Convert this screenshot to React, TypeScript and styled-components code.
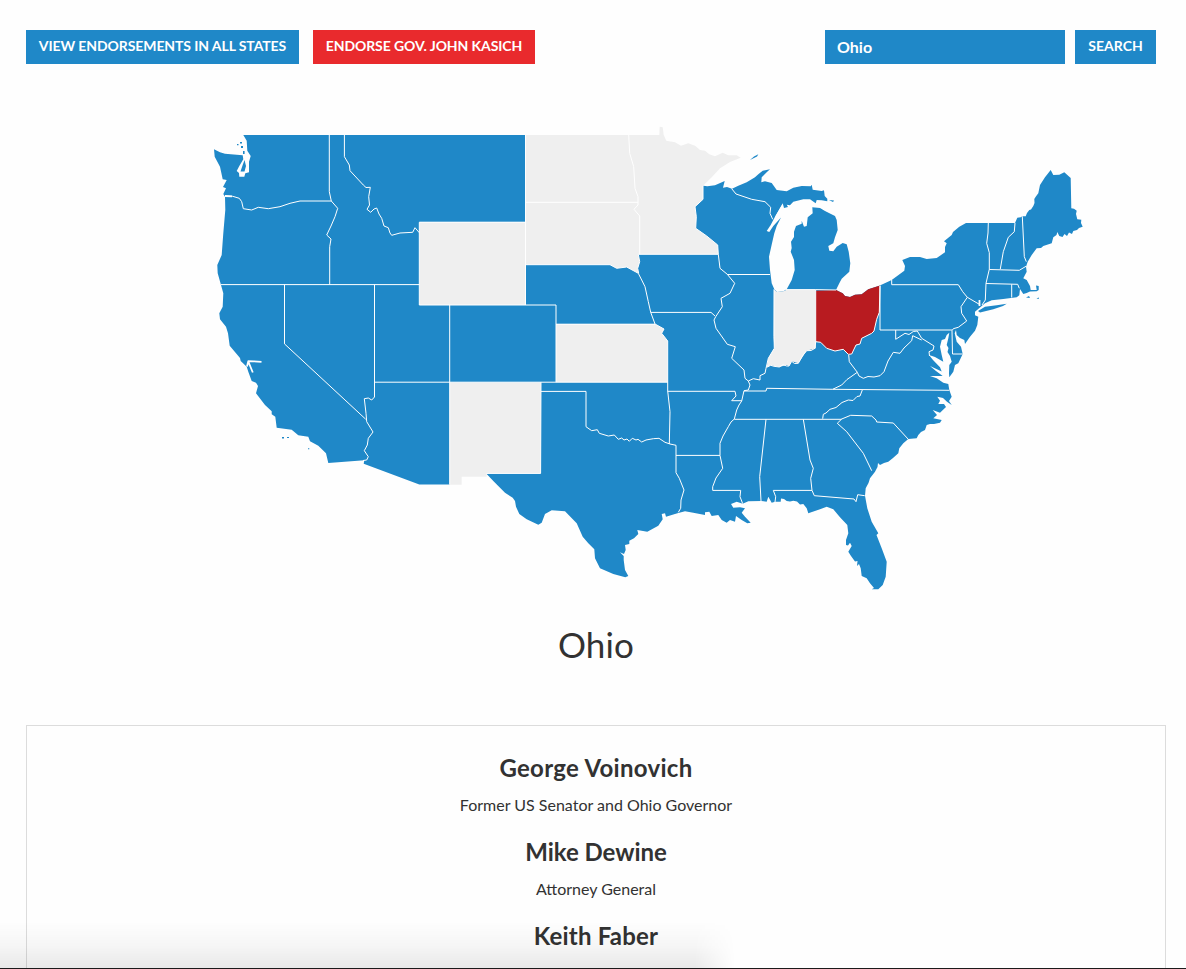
import React, { useState } from "react";
import styled, { createGlobalStyle } from "styled-components";

const BLUE = "#1f88c8";
const RED = "#e92a2d";
const DARK_RED = "#b81b20";
const GREY = "#efefef";

const GlobalStyle = createGlobalStyle`
  * { box-sizing: border-box; }
  body {
    margin: 0;
    background: #fefefe;
    color: #323232;
    font-family: Lato, "Open Sans", sans-serif;
  }
`;

const Page = styled.div`
  position: relative;
  height: 969px;
  overflow: hidden;
  padding: 30px 20px 0 26px;
`;

const Toolbar = styled.div`
  display: flex;
  justify-content: space-between;
  padding-right: 10px;
`;

const Group = styled.div<{ $gap: number }>`
  display: flex;
  gap: ${(p) => p.$gap}px;
`;

const Button = styled.button<{ $color: string; $width: number; $tracking: number }>`
  width: ${(p) => p.$width}px;
  height: 34px;
  padding: 0 0 2px;
  border: 0;
  background: ${(p) => p.$color};
  color: #fff;
  font: 700 14px/32px Lato, sans-serif;
  letter-spacing: ${(p) => p.$tracking}px;
  text-transform: uppercase;
  white-space: nowrap;
`;

const SearchInput = styled.input`
  width: 240px;
  height: 34px;
  padding: 0 12px 1px;
  border: 0;
  border-radius: 0;
  background: ${BLUE};
  color: #fff;
  font: 700 16px/33px Lato, sans-serif;
  outline: 0;
`;

const Map = styled.svg`
  display: block;
  width: 900px;
  height: 500px;
  margin: 46px 0 0 174px;
`;

const StateTitle = styled.h1`
  margin: 12px 0 0;
  font-size: 35px;
  font-weight: 400;
  line-height: 44px;
  letter-spacing: 0.1px;
  text-align: center;
`;

const List = styled.section`
  display: flex;
  flex-direction: column;
  align-items: center;
  height: 300px;
  margin-top: 59px;
  padding-top: 24px;
  border: 1px solid #dcdcdc;
`;

const Person = styled.article`
  height: 84px;
  text-align: center;
`;

const Name = styled.h2<{ $tracking: number }>`
  margin: 0;
  font-size: 24px;
  font-weight: 700;
  line-height: 36px;
  letter-spacing: ${(p) => p.$tracking}px;
`;

const Role = styled.p`
  margin: 7px 0 0;
  font-size: 16px;
  line-height: 24px;
`;

const BottomShade = styled.div`
  position: absolute;
  left: -40px;
  bottom: 0;
  width: 775px;
  height: 48px;
  background: linear-gradient(to bottom, rgba(0, 0, 0, 0), rgba(0, 0, 0, 0.03) 50%, rgba(0, 0, 0, 0.085));
  mask-image: linear-gradient(to right, #000 735px, transparent 775px);
`;

const BottomEdge = styled.div`
  position: absolute;
  left: 0;
  right: 0;
  bottom: 0;
  height: 1px;
  background: #1c1a1b;
`;

const MAINLAND =
  "M214,149.3 220,152.3 225,153.7 236.7,154.7 242.7,155.3 243.3,159.3 239.3,166 236.7,171 239,173 239.3,176.7 244.3,176.7 245.3,173.3 249,172.3 249,161.7 250.7,156 247.3,150.7 246.7,140.7 243.3,135 " +
  "525.5,135 530,140 650,180 701,188 703.3,185.7 " +
  "707.3,186.3 715,185.3 724.7,181 723,187.7 727,187 732,188.7 738.3,185.7 746.7,182.3 755,177.3 758.3,174.3 762.7,170.7 770,169.3 766.7,172.3 761.7,177.3 761.3,182.3 765,181.3 771.7,183 776.7,190 786.7,191.3 793.3,187.7 801.7,186 810.7,186.3 811.7,184.7 812.7,189.7 821.7,191 824,190.3 824.7,196 827.3,198.7 827.3,201.3 821.7,200.3 816.7,200 815.7,203.3 810,199.3 803.3,199.3 793.3,201.7 790,205.3 786.7,204.7 788,207 784,208 782.7,203.3 779.3,209.3 775,216.7 770.7,225 766.7,231 769.3,232 773.3,226 781,217.5 776.7,226 774.3,233.3 772,243.3 769,256.7 770,270 771.7,283.3 774.3,289.3 777.3,292 783.3,291.3 786.7,289.3 " +
  "791.7,280 794.7,270 794,260 790.7,251.7 791.7,248 791,241.7 794,237 794,231.7 796,226 801.7,223.7 801.7,220.7 804,226.7 806.7,226 807.7,217.3 812.7,213.3 812.3,207.3 820,208 825,211 835,216 836.7,220 837.7,230 835,237.3 833.3,243.3 828.3,246 829.3,250.7 833.3,251.3 836.7,246.7 842.7,243 846.7,244.3 848.7,251.7 850.3,263.3 849.3,271.7 841.7,278.7 839.3,283.3 836,290 " +
  "842.7,293.3 845,296 850,297 855,294.7 861.7,294.3 868.3,289.3 879.3,285.7 891.7,280 904.3,270.7 905,266 902.3,260 910,257 920,257 926.7,259 936.7,258 945,252.3 945,247 946.7,243.3 944,241.3 951.7,235 953,232 959.3,226.7 966,223 1015,223 1017.3,217.7 1020.7,217.3 1022.3,216.3 1025.7,216.3 1027,213 1029.3,210 1031,209.5 1033.3,206 1034.5,203 1034.3,199 1035.7,196.7 1038.3,193.3 1040,185 1045,177.3 1050.7,170 1053.3,175 1059.3,174.7 1064.3,172.3 1070.7,178 1071.3,208.3 1074,208.7 1076.7,210.7 1076,214 1077.3,219.3 1081.3,219.7 1081,223 1082.7,226.7 1079,228 1077,230 1073.3,231 1072,234 1069,232.5 1067,236 1064.5,234 1062.5,237 1059.3,236 1057.3,232 1056.5,235 1053.3,237.3 1051.7,243.3 1043.3,246 1041,248 1036.7,248.3 1031.7,255 1027.7,261.7 1026,266.7 1026.7,271.7 1023.3,278.3 1026.7,280 1030,286 1030.7,290 1036.7,290 1036,285.5 1038.7,286 1038.7,290 1036.7,291.3 1030,291.5 1026.7,293 1023.3,294 1020,289 1019.3,295.3 1016.7,297.3 1003.3,299 991.7,300.3 985,303.3 981.7,306 975,311.7 975,315.3 978.3,316.7 977.3,325 975,330.7 970,336.7 965,344 " +
  "964.3,340 960,338 956.7,335 956,330 954.7,333.3 956.7,341.7 961,346.7 962.7,354 958.3,363.3 955,365 953.3,371.7 949.3,377.3 949,373.3 949.3,365 951.7,361.7 950,356 947.5,352 948.5,348 946.7,345 948.3,338.3 949.3,332.7 946.7,335 945,339 941.7,340 940,346.7 941.7,355 943.3,361.7 935,357 929,355 933,360 940,367.3 941.7,371.5 930,366 936,371 942.7,376 930,376 936.7,378.3 943.3,382.7 948.3,384 949.3,390 951.7,396.7 949,401 951.7,405 947,401.7 943,398 937.3,396.7 940,400.7 938.3,404 944,404 946,407 940,412.7 932.7,410 937,415 933.3,418.3 941.7,420 940,422.7 934,424 930,424 926.7,425 925,430 921,432 918.3,435 916.7,438.3 908.3,439 903.3,443.3 899.3,448.3 898.3,453.3 893,458 888.3,461.7 884,463 880,465 878,463 877.5,467 875,471.7 870,478.3 868.5,483 865.7,488.3 865,495.7 867.3,508.3 871.7,521.7 878.3,533.3 876.5,535 881.7,548.3 886.7,561.7 885.7,576.7 882.7,585 878.3,589.3 871.7,589.3 874,588 870,583.3 866.7,578.3 861.7,576 860.7,568.3 859,564 857,566 857.5,561 855,561.5 851,556 848.3,551.7 851.7,546 850,542.7 848,545.5 846,545 846,540 848.3,533.3 847.3,525 840,517.3 833.3,509.3 826.7,506.7 820,509.3 808.3,513.3 806.7,508.3 803.3,504 800,504.5 797,501.5 793.3,500.7 790,501.5 786.7,501 784,499 781,498.5 780.7,501.7 775,501.7 771.7,502.7 768.3,496.7 766.7,501.7 761,501 748.3,501.3 742.7,503.7 " +
  "736.7,501.7 731,504 733.3,507.7 740,507.3 745,508.3 741.7,512.7 745,516.7 750.7,522.7 747.3,523.3 741.7,520 736,516 735,521.7 730,520 726.7,522.7 721.7,520 718.3,515 711.7,516 709.3,511.7 705,512.3 705,515 693.3,512.7 685,511.3 678.3,513 671.7,515 666,516.7 665,513.3 661.7,514 662.7,519.3 658.3,525.7 647.3,531.7 637.3,530 638.3,534 634,538.3 629.3,540.7 629.3,544 625,545 625.7,550 624,554 620,552.3 623.7,556 623.7,560 625,570 628.3,576 625.3,577.3 613.3,574 600,568.3 595,558.3 594.3,549.3 588.3,543.3 582.7,536.7 576.7,523.3 565,511.3 551.7,510.3 545,514 541.7,522.7 538.3,524.7 526.7,519.3 519.3,514 516,506.7 515,501 512.7,497.7 505,492.7 493.3,481 486.7,474 " +
  "490,472 452,472 449.7,484.5 419.3,484.5 363.7,463.7 364.3,460.3 328.3,463 326,453.3 318.3,445.7 310,441.3 308.3,436.7 298.3,435.3 291.7,429.7 276.7,427.7 275.3,416.7 271.7,414.3 271.7,411.3 265,405 256,393.3 258,386 256,382.7 251.7,381 248.3,371.7 246.7,366.7 240.7,361 240,358 229.7,345.7 228,333.3 226,326.7 220,319.3 219.3,313.3 222.7,306.7 223.3,293.3 221,285 217.7,273.3 217.3,265 221.7,255 223.3,233.3 225.3,210 225,196.7 223.3,194 226,188.3 223,187 226.7,180 222.7,179.3 220,166.7 214.7,156.7Z";

const ISLANDS = [
  "M978,311 985,306.7 996.7,305.3 1006.7,303.7 1003,306 993.3,309.3 980,312.6Z",
  "M750,160 754,156.5 758.3,154.3 757,156.5Z",
  "M244.5,160 242,167 240.5,171.5 244.5,171.5 246,166Z",
  "M237,144h1.5v1.2h-1.5ZM240,142h2v1.6h-2ZM241,146h2v2h-2ZM243,151h1.6v3h-1.6Z",
  "M282,437h2v1.5h-2Z",
  "M287,437h2v1h-2Z",
  "M308,448.2h1.3v1h-1.3Z",
  "M1026,297.5 1029,296 1030,298Z",
  "M1036.5,298.5 1038.8,297.5 1038.8,299Z",
  "M829,200 834,200.5 833,202Z",
];

const UNENDORSED = [
  // North Dakota, South Dakota and Minnesota
  "M525.5,135H659.3L659.7,126.7 662.7,127.3 663.7,135 666.3,140.7 675,142.3 681,145.7 688.3,143.3 695,145.7 700,150 705,150.7 709.3,154.3 715,156.3 722.7,152.7 728.3,155.3 736.7,155.3 740.7,157.7 730,162 720,168.3 711.7,177.3 703,185.7 703,199.3 695,206.7 696.3,216.7 695.7,228.3 706.7,236 717.7,245 718.3,254.3 638.3,254.3 639.7,261.7 637.7,268.3 638.3,273.3 626.7,267 616.7,268.3 610,264.7 525.5,264.7Z",
  // Wyoming
  "M419.3,222H525.5V305H419.3Z",
  // Kansas
  "M556,324H655L664,329 661.7,333.3 667.7,341V382.3H556Z",
  // New Mexico
  "M449.7,382.3H541L540.7,473.4H486.7V476.7H461.7V484.7H449.7Z",
  // Indiana
  "M774,289.5 777.3,292 783.3,291.3 786.7,289.7H815.7V348.3L806.7,350.7 798.3,363.3 791.7,361.3 789,366 786.7,365 779.3,367 770.7,365.3 766.7,367.3 768.3,358.3 774.3,348.3 773.7,336.7Z",
];

const OHIO =
  "M815.7,290.7 836,290 842.7,293.3 845,296 850,297 855,294.7 861.7,294.3 868.3,289.3 880,285.5 879.3,312.3 876.7,319.3 874,331 871.7,333.3 861.7,338.3 860,344 856,345 851.7,354 848.3,354.3 843.3,349.3 835,351 826.7,348.3 820.7,342.3 815.7,341.7Z";

const BORDERS = [
  "M225,196 232.7,196.3 239.3,198.3 241.7,201.7 243.3,208.7 251.7,210 258.3,207.3 268.3,208.7 280,206.7 290,203.3 300,201 331.3,201",
  "M329.3,135V191.7L331.3,201 337.7,208.3 335,216.7 331,226 326.7,235 331,239 329.7,246.7V284.5",
  "M221,284.6H419.5",
  "M344.4,135V156.7L349.3,165 350,170.7 363.3,185 366,187.5 370.3,187.3 368.7,196.7 369.5,205 367,209.3 370.7,212.3 374,209 376.7,208 379,214 381.7,218.3 384,226 388.3,227.7 390,233 391.7,235.3 400,233 412.7,232.3 415,227.7 419.3,232.7",
  "M284.5,284.5V343.9L365.7,419.2",
  "M374.5,284.5V397L371.7,400 368.3,398 364.3,398.7 366,413.3 366.7,421.7 373,432 368.3,438.3 367.3,445 364.3,450.7 368.3,456.7 366.7,460 363,460.5",
  "M374.5,382.2H667.7",
  "M449.7,305V484.6",
  "M419.3,222.3V305H556V382.2",
  "M419.3,222.2H525.5M525.5,135V305",
  "M556,324.2H655",
  "M525.5,264.7H610L616.7,268.3 626.7,267 638.3,273.3 641.7,280 645,286.7 648.3,301.7 650.7,312.3 655,324 664,329 661.7,333.3 667.7,341V391L670,411.7 669.3,444",
  "M525.5,202.3H638",
  "M628.7,135 629.7,153.3 633.7,166.7 635,188.3 638,196.7V205L634,209.3 639.7,216V254.3",
  "M718.3,254.3H638.3L639.7,261.7 637.7,268.3 638.7,273.3",
  "M703,185.7V199.3L695,206.7 696.3,216.7 695.7,228.3 706.7,236 717.7,245 718.3,254.3 720,268.3 727.3,274.3 734.7,283.3 730,293.3 721,298.3 722.3,306.7 715.7,316.7 714,320 716,328.3 727.3,344.3 735.3,346.7 731.7,358.3 744,370 745,378.3 748.3,381 750,385 748.3,390 744,390.7 741.7,401 739,405 736.7,410 734.3,419 731,422 728.3,426.7 723,436 720,443.3V455.5L722.7,468.3 716,478 712.7,486.7V490.4H740.7L740,496.7 742.7,503.7",
  "M727.3,274.5H770",
  "M731.7,188.7 736,194 751.7,199.3 765,201.7 770.7,207.3 770,213.3 772.7,219.3",
  "M650.7,312.4H711L715,316",
  "M667.7,391.3H735L736,396 731.7,400.7H741.7",
  "M541,382.2 540.6,473.4H486.7M541,391.4H586V426.7L591.7,430.7 597.3,429.7 599.3,433.3 608.3,436 614.3,435 618.3,439.3 621.7,438 624,440 627,439 629.3,441.3 632.3,438.3 636,440 638,439.3 641.7,442 646,440 653.3,438.7 659,438.3 665,442.3 670,444 676,445.3V472.7L679.3,478.3 684,490 681,500 680.7,508.3 678.3,512.3",
  "M676,455.4H720",
  "M774,289.3V336.7L774.3,348.3 768.3,358.3 766,368.3 765,373.3 760,375.7 760,380 753.3,378.7 748.3,381",
  "M766.7,367.3 770.7,365.3 774,366.3 779.3,367 783,364.7 786.7,366 789,366 791.7,361.3 794.5,363.5 798.3,363.3 803,355 806.7,350.7 811,350.5 815,348.3 815.7,341.7 820.7,342.3 826.7,348.3 835,351 843.3,349.3 848.3,354.3 851.7,354 856,345 860,344 861.7,338.3 871.7,333.3 874,331 876.7,319.3 879.3,312.3 880,285.5",
  "M786,289.6H815.7L836,290M815.7,289.6V342",
  "M880,286V330H952M891.7,280V284.7H958.3L962.7,291.7 967.3,297.3 961,306.7 961.7,313.3 966.7,321 958.3,327.3 953.3,328.7 952,330.7 952.5,354H962.7",
  "M967.3,297.3 979.3,304.3",
  "M744,391H766L766.7,388.3 832.7,389.3 949.3,390.3",
  "M734.3,419.3H766L841.7,419.3",
  "M766,419.3 759.7,476.7 761,501",
  "M803.3,419.3 810,460 813.3,468.3 810.7,478.3 812,490.4 814.3,495.7 854,499 856,501.7 857.7,494.7 864.7,495.7",
  "M812,490.4H773.3L775.7,496.7 775,502",
  "M841.7,419 837.3,423.3 846.7,431.7 863.3,453.3 871.7,470.7",
  "M841.7,419 850.7,415.3 871.7,416 876,420 876.7,422 893.3,423 908.3,439.3",
  "M822.7,418.7 823.3,414.3 826,413 830,409.3 836,407.5 842,402.5 848.3,400 853,400.5 857,396.5 860,396 862.3,390",
  "M832.7,389.3 841.7,385 847,379.5 857.3,372.3M848.7,355 849.3,361.7 857.3,372.3 859,376 863.3,378.3 868,376.5 874,377 880,375.7 884,371.7 888,361 893.3,352.3 900,353.3 904,348 911.7,340.7 912.7,335.7 921.7,340",
  "M895.7,330V339.3L905,333.3 909,334.5 913.3,331.5 917.3,331 921.7,338.3 934,346 933,350 929,351.7 929.5,356",
  "M988.3,223 988,233 986.7,243.3 989.3,252.7V269.3L986,283.3 985.3,300 982,305",
  "M1015,223 1014.3,231.7 1008.3,237.3 1003.3,251.7 1000.3,269",
  "M989.3,269.5 1019.3,270.3 1026,266.3",
  "M1022.3,216.3 1024.3,256.7 1026.3,261.7",
  "M986,283.5 1017.7,284.3 1019.3,288.3M1011.7,284.3V297.5",
];

// Narrow bays and rivers cut into the land
const INLETS = [
  "M247,366.5 248.3,361.2 254,361.3 261.5,361.8M248.5,362 252.8,372.5",
  "M225,196 232,196.3",
  "M782.5,206 776,217M979.5,300V306",
];

const PEOPLE = [
  { name: "George Voinovich", role: "Former US Senator and Ohio Governor", tracking: 0.3 },
  { name: "Mike Dewine", role: "Attorney General", tracking: -0.05 },
  { name: "Keith Faber", tracking: 0.2 },
];

export default function App() {
  const [query, setQuery] = useState("Ohio");
  return (
    <>
      <GlobalStyle />
      <Page>
        <Toolbar>
          <Group $gap={14}>
            <Button $color={BLUE} $width={273} $tracking={-0.09}>View endorsements in all states</Button>
            <Button $color={RED} $width={222} $tracking={-0.09}>Endorse Gov. John Kasich</Button>
          </Group>
          <Group $gap={10}>
            <SearchInput aria-label="State" value={query} onChange={(e) => setQuery(e.target.value)} />
            <Button $color={BLUE} $width={81} $tracking={0}>Search</Button>
          </Group>
        </Toolbar>

        <Map viewBox="200 110 900 500" role="img" aria-label="Endorsements by state">
          <path d={MAINLAND} fill={BLUE} />
          {ISLANDS.map((d) => <path key={d} d={d} fill={BLUE} />)}
          {UNENDORSED.map((d) => <path key={d} d={d} fill={GREY} />)}
          <path d={OHIO} fill={DARK_RED} />
          <g fill="none" stroke="#fff" strokeLinejoin="round">
            {BORDERS.map((d) => <path key={d} d={d} strokeWidth={1} />)}
            {INLETS.map((d) => <path key={d} d={d} strokeWidth={1.8} />)}
          </g>
        </Map>

        <StateTitle>Ohio</StateTitle>

        <List>
          {PEOPLE.map((p) => (
            <Person key={p.name}>
              <Name $tracking={p.tracking}>{p.name}</Name>
              {p.role && <Role>{p.role}</Role>}
            </Person>
          ))}
        </List>
        <BottomShade />
        <BottomEdge />
      </Page>
    </>
  );
}
